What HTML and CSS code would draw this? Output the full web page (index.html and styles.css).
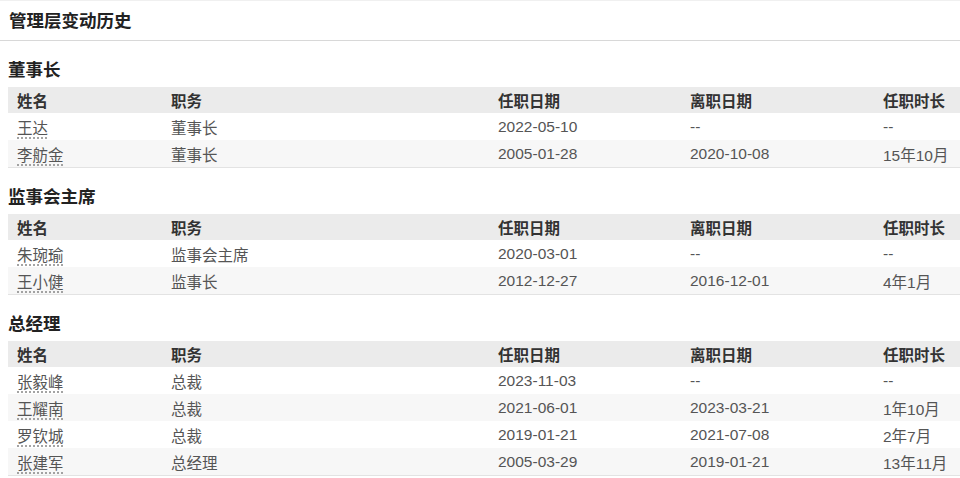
FILE: index.html
```html
<!DOCTYPE html>
<html lang="zh">
<head>
<meta charset="utf-8">
<title>管理层变动历史</title>
<link rel="stylesheet" href="styles.css">
</head>
<body>
<div class="page-title">管理层变动历史</div>

<section class="group">
  <h2 class="group-title">董事长</h2>
  <table class="hist">
    <colgroup><col class="c1"><col class="c2"><col class="c3"><col class="c4"><col class="c5"></colgroup>
    <thead><tr><th>姓名</th><th>职务</th><th>任职日期</th><th>离职日期</th><th>任职时长</th></tr></thead>
    <tbody>
      <tr><td><span class="name">王达</span></td><td>董事长</td><td>2022-05-10</td><td>--</td><td>--</td></tr>
      <tr><td><span class="name">李舫金</span></td><td>董事长</td><td>2005-01-28</td><td>2020-10-08</td><td>15年10月</td></tr>
    </tbody>
  </table>
</section>

<section class="group">
  <h2 class="group-title">监事会主席</h2>
  <table class="hist">
    <colgroup><col class="c1"><col class="c2"><col class="c3"><col class="c4"><col class="c5"></colgroup>
    <thead><tr><th>姓名</th><th>职务</th><th>任职日期</th><th>离职日期</th><th>任职时长</th></tr></thead>
    <tbody>
      <tr><td><span class="name">朱琬瑜</span></td><td>监事会主席</td><td>2020-03-01</td><td>--</td><td>--</td></tr>
      <tr><td><span class="name">王小健</span></td><td>监事长</td><td>2012-12-27</td><td>2016-12-01</td><td>4年1月</td></tr>
    </tbody>
  </table>
</section>

<section class="group">
  <h2 class="group-title">总经理</h2>
  <table class="hist">
    <colgroup><col class="c1"><col class="c2"><col class="c3"><col class="c4"><col class="c5"></colgroup>
    <thead><tr><th>姓名</th><th>职务</th><th>任职日期</th><th>离职日期</th><th>任职时长</th></tr></thead>
    <tbody>
      <tr><td><span class="name">张毅峰</span></td><td>总裁</td><td>2023-11-03</td><td>--</td><td>--</td></tr>
      <tr><td><span class="name">王耀南</span></td><td>总裁</td><td>2021-06-01</td><td>2023-03-21</td><td>1年10月</td></tr>
      <tr><td><span class="name">罗钦城</span></td><td>总裁</td><td>2019-01-21</td><td>2021-07-08</td><td>2年7月</td></tr>
      <tr><td><span class="name">张建军</span></td><td>总经理</td><td>2005-03-29</td><td>2019-01-21</td><td>13年11月</td></tr>
    </tbody>
  </table>
</section>
</body>
</html>
```
FILE: styles.css
```css
html, body {
  margin: 0;
  padding: 0;
  background: #fff;
}
body {
  font-family: "Liberation Sans", "Noto Sans CJK SC", sans-serif;
  font-size: 15.5px;
  color: #555;
  overflow: hidden;
}
.page-title {
  box-sizing: border-box;
  height: 41px;
  line-height: 40px;
  padding: 0 9px;
  font-size: 17.5px;
  font-weight: bold;
  color: #222;
  border-top: 1px solid #f0f0f0;
  border-bottom: 1px solid #d8d8d8;
}
.group {
  padding-left: 8px;
  margin-top: 19px;
}
.group-title {
  margin: 0 0 7px 0;
  font-size: 17.5px;
  font-weight: bold;
  line-height: 20px;
  color: #222;
}
.hist {
  width: 952px;
  border-collapse: collapse;
  table-layout: fixed;
  border-bottom: 1px solid #e3e3e3;
}
.c1 { width: 154px; }
.c2 { width: 327px; }
.c3 { width: 192px; }
.c4 { width: 193px; }
.c5 { width: 86px; }
.hist th, .hist td {
  text-align: left;
  padding: 0 0 0 9px;
  white-space: nowrap;
}
.hist th {
  height: 26px;
  background: #ebebeb;
  color: #333;
  font-weight: bold;
}
.hist td {
  height: 27px;
  color: #555;
}
.hist tbody tr:nth-child(even) td {
  background: #f7f7f7;
}
.name {
  text-decoration: underline dotted #8a8a8a;
  text-underline-offset: 4px;
}
```
